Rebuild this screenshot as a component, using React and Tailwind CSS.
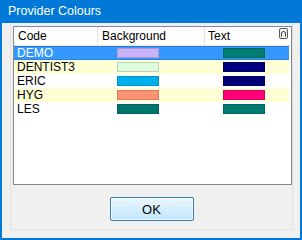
import React from 'react'

const rows = [
  { code: 'DEMO', bg: '#c9b3f7', text: '#007d70', selected: true },
  { code: 'DENTIST3', bg: '#defbde', text: '#000080', stripe: true },
  { code: 'ERIC', bg: '#00b0ec', text: '#000078' },
  { code: 'HYG', bg: '#fc9173', text: '#ff0078', stripe: true },
  { code: 'LES', bg: '#007570', text: '#007a72' },
]

function Swatch({ color }) {
  return (
    <div
      className="w-[42px] h-[10px] border border-black/15"
      style={{ background: color }}
    />
  )
}

export default function App() {
  return (
    <div
      className="w-[302px] h-[240px] bg-[#0078d7] flex flex-col px-[2px] pb-[2px] text-[12px] leading-none"
      style={{ fontFamily: '"Liberation Sans", Arial, sans-serif' }}
    >
      {/* TITLE BAR */}
      <div className="h-[23px] shrink-0 flex items-center pl-[6px] text-white text-[12.5px]">
        Provider Colours
      </div>

      {/* CLIENT AREA */}
      <div className="flex-1 bg-[#f0f0f0] flex flex-col pl-[8px] pr-[7px] pb-[8px]">
        <div className="flex-1 flex flex-col border-x border-b border-[#e2e2e2] pt-[3px] pl-[2px]">
          {/* LIST VIEW */}
          <div className="w-[279px] h-[159px] border border-[#828790] bg-white flex flex-col">
            <div className="h-[19px] shrink-0 flex items-stretch bg-white border-b border-[#efe3cf] text-black">
              <div className="w-[84px] flex items-center pl-[4px] border-r border-[#e5e5e5]">Code</div>
              <div className="w-[107px] flex items-center pl-[4px] border-r border-[#e5e5e5]">Background</div>
              <div className="flex-1 flex items-center pl-[3px]">Text</div>
              <div className="w-[12px] flex items-start pt-[1px] pr-[2px]">
                <div className="w-[9px] h-[11px] rounded-[2px] border border-[#5a5a5a] bg-[#f4f4f4] flex items-center justify-center">
                  <svg width="5" height="6" viewBox="0 0 5 6">
                    <path d="M0.5 5.5 V2.5 A2 2 0 0 1 4.5 2.5 V5.5" fill="none" stroke="#333" strokeWidth="1" />
                  </svg>
                </div>
              </div>
            </div>
            <div className="flex flex-col pr-[2px]">
              {rows.map(r => (
                <div
                  key={r.code}
                  className={
                    'h-[14px] flex items-center ' +
                    (r.selected
                      ? 'bg-[#3399ff] text-white border-y border-[#2b7fd6]'
                      : r.stripe
                      ? 'bg-[#ffffd6] text-black'
                      : 'bg-white text-black')
                  }
                >
                  <div className="w-[85px] pl-[3px]">{r.code}</div>
                  <div className="w-[107px] pl-[18px]">
                    <Swatch color={r.bg} />
                  </div>
                  <div className="pl-[17px]">
                    <Swatch color={r.text} />
                  </div>
                </div>
              ))}
            </div>
          </div>

          {/* BUTTON ROW */}
          <div className="flex justify-center pt-[12px] pr-[2px]">
            <button className="w-[84px] h-[24px] rounded-[2px] border border-[#3c7fb1] bg-gradient-to-b from-[#eaf6fd] to-[#bee6fd] text-black text-[13px] shadow-[inset_0_0_0_1px_rgba(255,255,255,0.6)]">
              OK
            </button>
          </div>
        </div>
      </div>
    </div>
  )
}
